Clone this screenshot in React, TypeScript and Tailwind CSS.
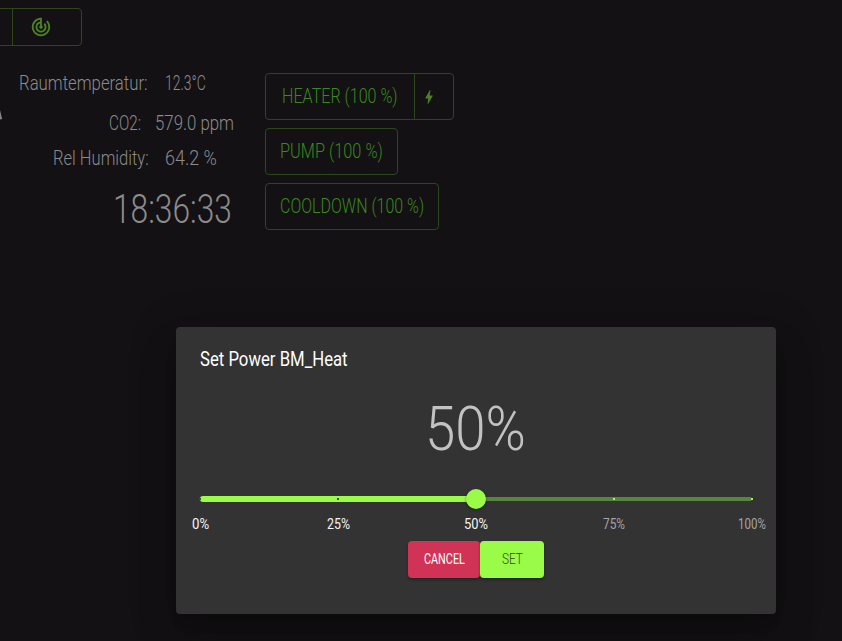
import { useLayoutEffect, useRef, useState } from "react";
import { MdBolt, MdTrackChanges } from "react-icons/md";

type FitProps = { text: string; width: number; className?: string };

/* Condenses a line of text horizontally to the given width. */
function Fit({ text, width, className = "" }: FitProps) {
  const ref = useRef<HTMLSpanElement>(null);
  const [scale, setScale] = useState(1);
  useLayoutEffect(() => {
    if (ref.current) setScale(width / ref.current.offsetWidth);
  }, [text, width]);
  return (
    <span className={`block shrink-0 ${className}`} style={{ width }}>
      <span
        ref={ref}
        className="inline-block origin-left whitespace-nowrap align-top"
        style={{ transform: `scaleX(${scale})` }}
      >
        {text}
      </span>
    </span>
  );
}

const marks = [
  { value: 0, width: 17 },
  { value: 25, width: 23 },
  { value: 50, width: 24 },
  { value: 75, width: 22 },
  { value: 100, width: 28 },
];

function Slider() {
  return (
    <div className="mx-6">
      <div className="relative h-5">
        <div className="absolute inset-x-0 top-2 h-1 rounded-full bg-[#5a8540]" />
        <div className="absolute left-0 top-[7px] h-1.5 w-1/2 rounded-full bg-[#9afb48]" />
        {marks.map((m) => (
          <div
            key={m.value}
            className={`absolute top-[9px] -ml-px size-0.5 ${m.value > 50 ? "bg-[#9afb48]" : "bg-[#33561c]"}`}
            style={{ left: `${m.value}%` }}
          />
        ))}
        <div className="absolute left-1/2 top-0 -ml-2.5 size-5 rounded-full bg-[#9afb48] shadow-[0_1px_3px_rgba(0,0,0,0.4)]" />
      </div>
      <div className="-mx-6 mt-[5px] flex h-5 justify-between text-[14px] font-normal leading-5">
        {marks.map((m) => (
          <div
            key={m.value}
            className={`flex w-12 justify-center ${m.value > 50 ? "text-[#a5a5a5]" : "text-[#f4f4f4]"}`}
          >
            <Fit text={`${m.value}%`} width={m.width} />
          </div>
        ))}
      </div>
    </div>
  );
}

export default function App() {
  return (
    <div className="relative h-[641px] w-[842px] overflow-hidden bg-[#131113] font-['Roboto',sans-serif] font-light">
      <div className="flex h-[54px] pt-2">
        <div className="-ml-1 flex h-[38px] w-[86px] rounded border border-[#2d471b]">
          <div className="w-4 border-r border-[#2d471b]" />
          <div className="flex w-14 items-center justify-center text-[#4b8223]">
            <MdTrackChanges size={22} />
          </div>
        </div>
      </div>

      <div className="flex">
        <div className="w-[265px] pt-[19px] text-[20px] leading-5 text-[#8c8b8c]">
          <div className="flex h-5 gap-[17px] pl-[19px]">
            <Fit text="Raumtemperatur:" width={129} />
            <Fit text="12.3°C" width={41} />
          </div>
          <div className="mt-5 flex h-5 gap-[14px] pl-[109px]">
            <Fit text="CO2:" width={32} />
            <Fit text="579.0 ppm" width={79} />
          </div>
          <div className="mt-[15px] flex h-5 gap-4 pl-[53px]">
            <Fit text="Rel Humidity:" width={96} />
            <Fit text="64.2 %" width={52} />
          </div>
          <div className="mt-[22px] flex h-10 pl-[113px] text-[40px] leading-10">
            <Fit text="18:36:33" width={119} />
          </div>
        </div>

        <div className="flex flex-col items-start gap-2 pt-[19px] text-[20px] leading-5 text-[#3a8820]">
          <div className="flex h-[47px] w-[189px] items-center rounded border border-[#2d471b]">
            <div className="flex h-full w-[149px] items-center border-r border-[#2d471b] pb-px pl-4">
              <Fit text="HEATER (100 %)" width={116} />
            </div>
            <div className="flex pl-[5px] text-[#4b8223]">
              <MdBolt size={18} />
            </div>
          </div>
          <div className="flex h-[47px] w-[133px] items-center rounded border border-[#2d471b] pb-px pl-3.5">
            <Fit text="PUMP (100 %)" width={103} />
          </div>
          <div className="flex h-[47px] w-[174px] items-center rounded border border-[#2d471b] pb-px pl-3.5">
            <Fit text="COOLDOWN (100 %)" width={144} />
          </div>
        </div>
      </div>

      <svg className="absolute left-0 top-[107px]" width="5" height="14" viewBox="0 0 5 14">
        <path d="M0 3L2.2 12L0 12.5Z" fill="#858485" />
      </svg>

      <div className="absolute left-[176px] top-[327px] h-[287px] w-[600px] rounded bg-[#333333] shadow-[0_11px_15px_-7px_rgba(0,0,0,0.2),0_24px_38px_3px_rgba(0,0,0,0.14),0_9px_46px_8px_rgba(0,0,0,0.12)]">
        <div className="px-6 pt-5 text-[20px] font-normal leading-6 text-white">
          <Fit text="Set Power BM_Heat" width={148} />
        </div>
        <div className="mt-7 flex h-[60px] justify-center text-[61px] leading-[60px] text-[#c2c2c2]">
          <Fit text="50%" width={101} className="-ml-0.5" />
        </div>
        <div className="mt-[30px]">
          <Slider />
        </div>
        <div className="mt-[7px] flex justify-center text-[14px] leading-5">
          <div className="flex h-[37px] w-[72px] items-center justify-center rounded bg-[#d13357] pb-px font-normal text-white shadow-[0_2px_3px_rgba(0,0,0,0.3)]">
            <Fit text="CANCEL" width={41} />
          </div>
          <div className="flex h-[37px] w-16 items-center justify-center rounded bg-[#9afb48] pb-px text-[#2e4b16] shadow-[0_2px_3px_rgba(0,0,0,0.3)]">
            <Fit text="SET" width={21} />
          </div>
        </div>
      </div>
    </div>
  );
}
